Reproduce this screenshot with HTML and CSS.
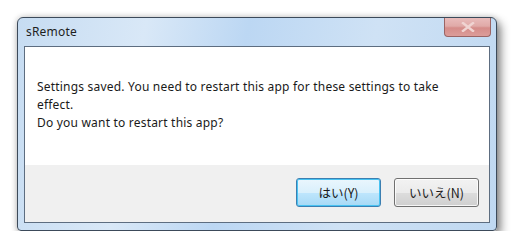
FILE: index.html
```html
<!DOCTYPE html>
<html>
<head>
<meta charset="utf-8">
<link rel="stylesheet" href="styles.css">
</head>
<body>
<div class="window">
  <div class="titlebar">
    <span class="title">sRemote</span>
    <div class="close"><svg width="14" height="10" viewBox="0 0 14 10"><path d="M2 1 L12 9 M12 1 L2 9" stroke="#f0d4d2" stroke-width="2.4" stroke-linecap="square"/></svg></div>
  </div>
  <div class="client">
    <div class="message">
      <p>Settings saved. You need to restart this app for these settings to take effect.</p>
      <p>Do you want to restart this app?</p>
    </div>
    <div class="buttons">
      <button class="btn default">はい(Y)</button>
      <button class="btn">いいえ(N)</button>
    </div>
  </div>
</div>
</body>
</html>
```
FILE: styles.css
```css
html, body { margin: 0; padding: 0; background: #ffffff; }
body { padding: 17px 0 0 17px; font-family: "Noto Sans", "Noto Sans CJK JP", sans-serif; }
.window {
  width: 480px;
  height: 214px;
  box-sizing: border-box;
  border: 1px solid #3c4a5a;
  border-radius: 6px 6px 4px 4px;
  background: linear-gradient(100deg, #c6dcf2 0%, #d9e8f7 25%, #bcd7f3 45%, #cfe2f5 70%, #bfd8f1 100%);
  box-shadow: 4px 5px 10px rgba(0,0,0,0.45), 0 0 6px rgba(0,0,0,0.2);
  padding: 0 6px 7px 6px;
  display: flex;
  flex-direction: column;
}
.titlebar {
  height: 28px;
  display: flex;
  align-items: flex-start;
  justify-content: space-between;
}
.title {
  font-size: 12px;
  color: #1e1e1e;
  margin: 6px 0 0 2px;
  line-height: 16px;
  letter-spacing: 0.2px;
}
.close {
  width: 47px;
  height: 19px;
  margin-right: -1px;
  box-sizing: border-box;
  border: 1px solid #9a6464;
  border-top: none;
  border-radius: 0 0 4px 4px;
  background: linear-gradient(#e9bcbb 0%, #e0aaa8 45%, #d58c89 55%, #dc9d9a 100%);
  display: flex;
  align-items: center;
  justify-content: center;
}
.client {
  flex: 1;
  border: 1px solid #5d6d80;
  background: #f0f0f0;
  display: flex;
  flex-direction: column;
}
.message {
  background: #ffffff;
  height: 118px;
  box-sizing: border-box;
  padding: 31px 0 0 12px;
  font-size: 12px;
  line-height: 18px;
  letter-spacing: 0.2px;
  color: #1a1a1a;
}
.message p { margin: 0; width: 425px; }
.buttons {
  display: flex;
  justify-content: flex-end;
  gap: 13px;
  padding: 13px 10px 0 0;
}
.btn {
  width: 85px;
  height: 29px;
  box-sizing: border-box;
  border: 1px solid #707070;
  border-radius: 3px;
  background: linear-gradient(#f2f2f2 0%, #ebebeb 50%, #dddddd 51%, #cfcfcf 100%);
  font-family: "Noto Sans CJK JP", sans-serif;
  font-size: 12.5px;
  color: #1a1a1a;
  padding: 0;
  box-shadow: inset 0 0 0 1px rgba(255,255,255,0.8);
}
.btn.default {
  border: 1px solid #3c7fb1;
  background: linear-gradient(#eaf6fd 0%, #d9f0fc 50%, #bee6fd 51%, #a7d9f5 100%);
  box-shadow: inset 0 0 0 1px #48c3f2;
}
```
